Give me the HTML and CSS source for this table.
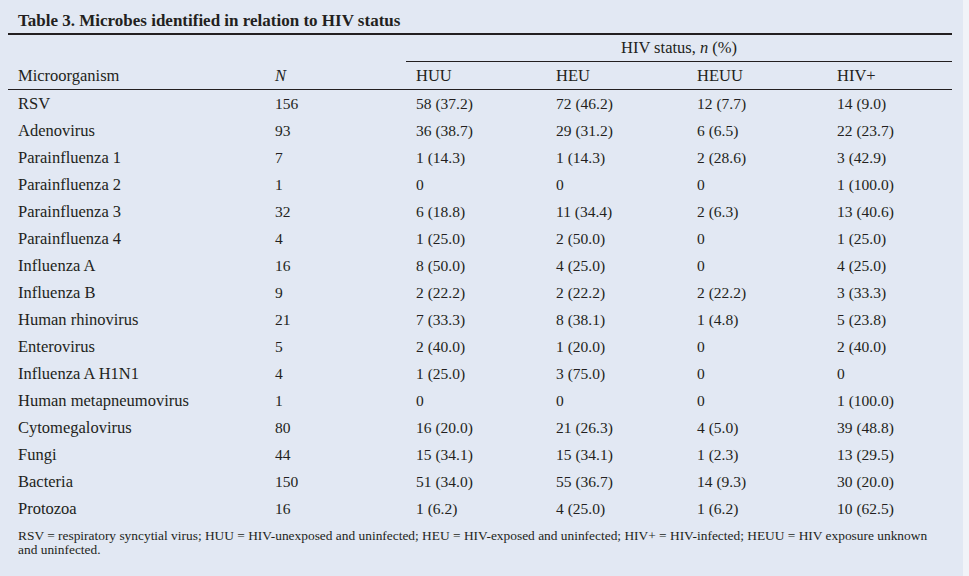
FILE: index.html
```html
<!DOCTYPE html>
<html lang="en">
<head>
<meta charset="utf-8">
<title>Table 3</title>
<link rel="stylesheet" href="styles.css">
</head>
<body>
<div class="page">
  <div class="title">Table 3. Microbes identified in relation to HIV status</div>
  <table class="data">
    <colgroup>
      <col class="c1"><col class="c2"><col class="c3"><col class="c4"><col class="c5"><col class="c6">
    </colgroup>
    <thead>
      <tr class="group">
        <th></th><th></th>
        <th colspan="4" class="span">HIV status, <i>n</i> (%)</th>
      </tr>
      <tr class="heads">
        <th>Microorganism</th><th><i>N</i></th><th>HUU</th><th>HEU</th><th>HEUU</th><th>HIV+</th>
      </tr>
    </thead>
    <tbody>
      <tr><td>RSV</td><td>156</td><td>58 (37.2)</td><td>72 (46.2)</td><td>12 (7.7)</td><td>14 (9.0)</td></tr>
      <tr><td>Adenovirus</td><td>93</td><td>36 (38.7)</td><td>29 (31.2)</td><td>6 (6.5)</td><td>22 (23.7)</td></tr>
      <tr><td>Parainfluenza 1</td><td>7</td><td>1 (14.3)</td><td>1 (14.3)</td><td>2 (28.6)</td><td>3 (42.9)</td></tr>
      <tr><td>Parainfluenza 2</td><td>1</td><td>0</td><td>0</td><td>0</td><td>1 (100.0)</td></tr>
      <tr><td>Parainfluenza 3</td><td>32</td><td>6 (18.8)</td><td>11 (34.4)</td><td>2 (6.3)</td><td>13 (40.6)</td></tr>
      <tr><td>Parainfluenza 4</td><td>4</td><td>1 (25.0)</td><td>2 (50.0)</td><td>0</td><td>1 (25.0)</td></tr>
      <tr><td>Influenza A</td><td>16</td><td>8 (50.0)</td><td>4 (25.0)</td><td>0</td><td>4 (25.0)</td></tr>
      <tr><td>Influenza B</td><td>9</td><td>2 (22.2)</td><td>2 (22.2)</td><td>2 (22.2)</td><td>3 (33.3)</td></tr>
      <tr><td>Human rhinovirus</td><td>21</td><td>7 (33.3)</td><td>8 (38.1)</td><td>1 (4.8)</td><td>5 (23.8)</td></tr>
      <tr><td>Enterovirus</td><td>5</td><td>2 (40.0)</td><td>1 (20.0)</td><td>0</td><td>2 (40.0)</td></tr>
      <tr><td>Influenza A H1N1</td><td>4</td><td>1 (25.0)</td><td>3 (75.0)</td><td>0</td><td>0</td></tr>
      <tr><td>Human metapneumovirus</td><td>1</td><td>0</td><td>0</td><td>0</td><td>1 (100.0)</td></tr>
      <tr><td>Cytomegalovirus</td><td>80</td><td>16 (20.0)</td><td>21 (26.3)</td><td>4 (5.0)</td><td>39 (48.8)</td></tr>
      <tr><td>Fungi</td><td>44</td><td>15 (34.1)</td><td>15 (34.1)</td><td>1 (2.3)</td><td>13 (29.5)</td></tr>
      <tr><td>Bacteria</td><td>150</td><td>51 (34.0)</td><td>55 (36.7)</td><td>14 (9.3)</td><td>30 (20.0)</td></tr>
      <tr><td>Protozoa</td><td>16</td><td>1 (6.2)</td><td>4 (25.0)</td><td>1 (6.2)</td><td>10 (62.5)</td></tr>
    </tbody>
  </table>
  <p class="note">RSV = respiratory syncytial virus; HUU = HIV-unexposed and uninfected; HEU = HIV-exposed and uninfected; HIV+ = HIV-infected; HEUU = HIV exposure unknown and uninfected.</p>
</div>
</body>
</html>
```

FILE: styles.css
```css
html, body {
  margin: 0;
  padding: 0;
  background: #f1f3f8;
}
.page {
  width: 944px;
  height: 576px;
  padding: 0 11px 0 8px;
  background: #e2e8f3;
  color: #231f20;
  font-family: "Liberation Serif", "Times New Roman", serif;
  overflow: hidden;
}
.title {
  padding: 9px 0 0 10px;
  height: 24px;
  line-height: 24px;
  font-size: 17px;
  font-weight: bold;
  border-bottom: 2px solid #231f20;
}
.data {
  width: 944px;
  border-collapse: collapse;
  table-layout: fixed;
  font-size: 15.5px;
}
.c1 { width: 257px; }
.c2 { width: 141px; }
.c3 { width: 140px; }
.c4 { width: 141px; }
.c5 { width: 140px; }
.c6 { width: 125px; }
.data th, .data td {
  padding: 0 0 0 10px;
  text-align: left;
  font-weight: normal;
  white-space: nowrap;
}
.data th,
.data td:first-child {
  font-size: 16.5px;
}
.group th {
  height: 26px;
  line-height: 26px;
}
.group .span {
  text-align: center;
  padding: 0;
  border-bottom: 1px solid #231f20;
}
.heads th {
  height: 27px;
  line-height: 27px;
  border-bottom: 1px solid #231f20;
}
.data td {
  height: 27px;
  line-height: 27px;
}
.note {
  margin: 0;
  padding: 7px 18px 0 10px;
  font-size: 13.4px;
  line-height: 14px;
}
```
